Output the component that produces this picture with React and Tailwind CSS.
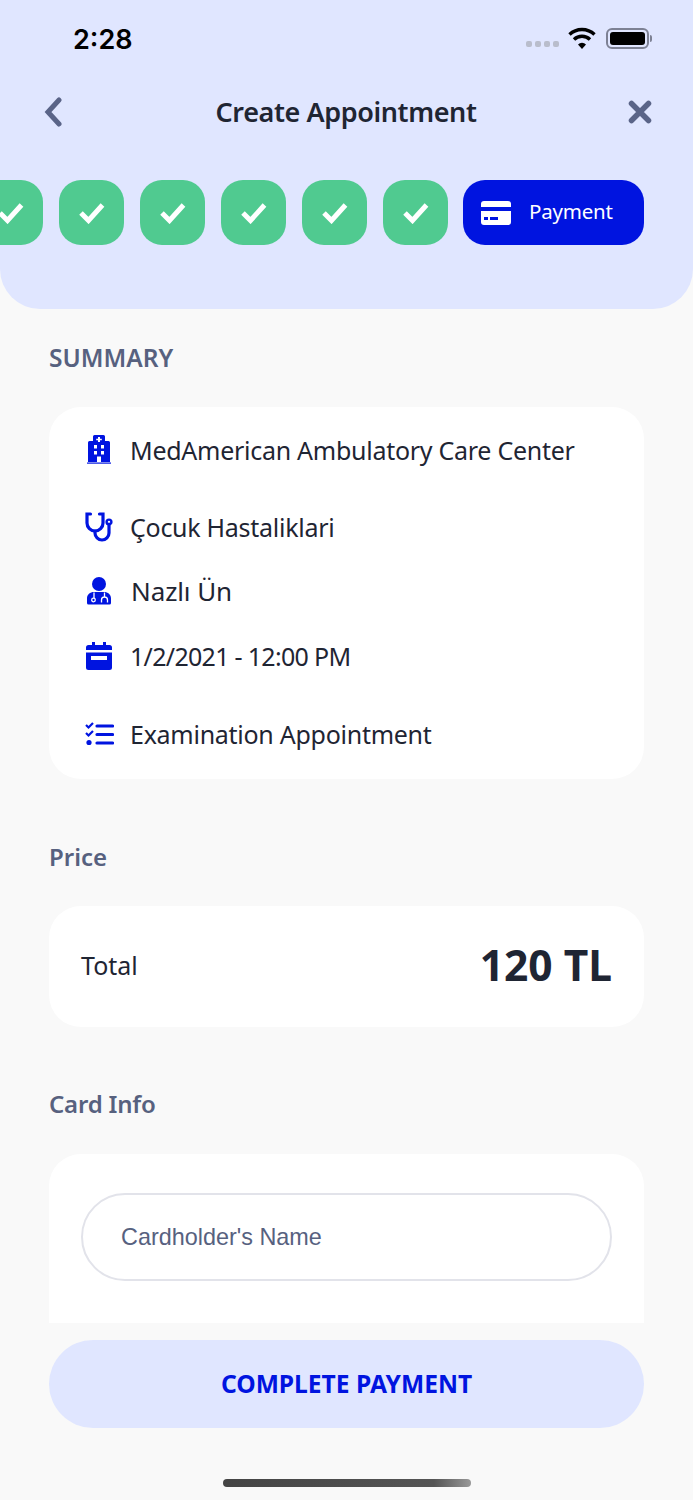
// Appointment wizard - final payment step
import React from 'react';

const CheckIcon = () => (
  <svg width="28" height="22" viewBox="0 0 28 22" fill="none">
    <path d="M3 11l7.5 7.5L24.5 3" stroke="#fff" strokeWidth="5" />
  </svg>
);

const HospitalIcon = () => (
  <svg width="26" height="30" viewBox="0 0 26 30">
    <path
      fill="#0014e0"
      fillRule="evenodd"
      d="M7 1.500A1.500 1.500 0 0 1 8.500 0h9A1.500 1.500 0 0 1 19 1.500V6h3.500A1.500 1.500 0 0 1 24 7.500V27H2V7.500A1.500 1.500 0 0 1 3.500 6H7V1.500zM12 2v1.800h-1.800v1.400H12V7h2V5.200h1.800V3.800H14V2h-2zM8 10v3.500h3V10H8zm7 0v3.500h3V10h-3zm-7 6v3.500h3V16H8zm7 0v3.500h3V16h-3zM11 21.500V27h4v-5.500h-4z"
    />
    <rect x="1" y="27.500" width="24" height="1.200" fill="#0014e0" />
  </svg>
);

const StethoscopeIcon = () => (
  <svg width="30" height="30" viewBox="0 0 30 30" fill="none" stroke="#0014e0" strokeWidth="3.200" strokeLinecap="round">
    <path d="M6.500 2H3v9a8 8 0 0 0 16 0V2h-3.500" />
    <path d="M11 19v2a7 7 0 0 0 14 0v-9" />
    <circle cx="25" cy="10" r="2.400" strokeWidth="2.400" />
  </svg>
);

const DoctorIcon = () => (
  <svg width="26" height="28" viewBox="0 0 26 28">
    <circle cx="13" cy="7" r="7" fill="#0014e0" />
    <path d="M1 21.500C1 17.500 4 15 8 15h10c4 0 7 2.500 7 6.500V26a1.500 1.500 0 0 1-1.500 1.500h-21A1.500 1.500 0 0 1 1 26z" fill="#0014e0" />
    <circle cx="7.500" cy="23" r="1.800" fill="none" stroke="#fff" strokeWidth="1.300" />
    <path d="M15.500 25.500V23a3 3 0 0 1 6 0v2.500M8 15.500v5.500M18.500 15.500V20" fill="none" stroke="#fff" strokeWidth="1.300" />
  </svg>
);

const CalendarIcon = () => (
  <svg width="26" height="28" viewBox="0 0 26 28">
    <path
      fill="#0014e0"
      fillRule="evenodd"
      d="M6 0h3v3h8V0h3v3h3.500A2.500 2.500 0 0 1 26 5.500V8H0V5.500A2.500 2.500 0 0 1 2.500 3H6V0zM0 10.500h26V25.500A2.500 2.500 0 0 1 23.500 28h-21A2.500 2.500 0 0 1 0 25.500V10.500zM5 14v4h16v-4H5z"
    />
  </svg>
);

const ChecklistIcon = () => (
  <svg width="29" height="24" viewBox="0 0 29 24" fill="none" stroke="#0014e0">
    <path d="M1 3l2.500 2.500L8 1M1 11l2.500 2.500L8 9" strokeWidth="2.200" />
    <circle cx="4" cy="20.500" r="2.600" fill="#0014e0" stroke="none" />
    <path d="M12 4h15.500M12 12.500h15.500M12 21h15.500" strokeWidth="3.200" strokeLinecap="round" />
  </svg>
);

const CardIcon = () => (
  <svg width="30" height="24" viewBox="0 0 30 24">
    <path d="M0 6V3a3 3 0 0 1 3-3h24a3 3 0 0 1 3 3v3z" fill="#fff" />
    <path
      fill="#fff"
      fillRule="evenodd"
      d="M0 10h30v11a3 3 0 0 1-3 3H3a3 3 0 0 1-3-3zM3 16v3h4v-3zM9 16v3h8v-3z"
    />
  </svg>
);

const StatusIcons = () => (
  <div className="flex items-center">
    <div className="flex gap-[3px] mt-3 mr-[9px]">
      {[0, 1, 2, 3].map((i) => (
        <span key={i} className="w-[6px] h-[6px] rounded-[2px] bg-[#b9bdcc]" />
      ))}
    </div>
    <svg width="28" height="22" viewBox="0 0 28 22" fill="none" stroke="#000" strokeWidth="3.400">
      <path d="M1.500 7.500a18 18 0 0 1 25 0" />
      <path d="M6 12.500a11.500 11.500 0 0 1 16 0" />
      <path d="M14 22l-4-4.500a5.500 5.500 0 0 1 8 0z" fill="#000" stroke="none" />
    </svg>
    <div className="flex items-center ml-[10px]">
      <div className="w-[43px] h-[21px] rounded-[6px] border-2 border-[#7d8194] p-[2px]">
        <div className="w-full h-full rounded-[3px] bg-black" />
      </div>
      <div className="w-[2px] h-[7px] ml-px rounded-r-sm bg-[#7d8194]" />
    </div>
  </div>
);

const summaryRows = [
  { icon: <HospitalIcon />, text: 'MedAmerican Ambulatory Care Center', rowClass: '', textClass: 'text-[25px] tracking-[-0.27px]' },
  { icon: <StethoscopeIcon />, text: 'Çocuk Hastaliklari', rowClass: 'mt-[37px]', textClass: 'text-[25px] tracking-[-0.27px]' },
  { icon: <DoctorIcon />, text: 'Nazlı Ün', rowClass: 'mt-[24px]', textClass: 'text-[26px] tracking-[-0.1px] ml-px' },
  { icon: <CalendarIcon />, text: '1/2/2021 - 12:00 PM', rowClass: 'mt-[25px]', textClass: 'text-[25px] tracking-[-0.7px]' },
  { icon: <ChecklistIcon />, text: 'Examination Appointment', rowClass: 'mt-[38px]', textClass: 'text-[25px] tracking-[-0.27px]' },
];

const App = () => {
  return (
    <div
      className="w-[693px] h-[1500px] overflow-hidden flex flex-col bg-[#f9f9f9] text-[#1f2533]"
      style={{ fontFamily: '"Noto Sans", sans-serif' }}
    >
      {/* Header */}
      <header className="h-[309px] shrink-0 bg-[#e0e6ff] rounded-b-[40px] overflow-hidden">
        <div className="h-[76px] pl-[73px] pr-[41px] flex items-center justify-between">
          <span className="text-[27px] leading-none font-semibold text-black font-['Inter'] mt-[3px]">2:28</span>
          <StatusIcons />
        </div>

        <div className="h-[72px] pl-[42px] pr-[41px] flex items-center justify-between">
          <svg width="22" height="30" viewBox="0 0 22 30" fill="none">
            <path d="M17 3L6 15l11 12" stroke="#5a6488" strokeWidth="5" strokeLinecap="round" />
          </svg>
          <h1 className="text-[27px] tracking-[-0.4px] font-semibold leading-none -mt-[2px]">Create Appointment</h1>
          <svg width="24" height="24" viewBox="0 0 24 24" fill="none">
            <path d="M3.500 3.500l17 17M20.500 3.500l-17 17" stroke="#5a6488" strokeWidth="5.500" strokeLinecap="round" />
          </svg>
        </div>

        {/* Wizard steps */}
        <div className="mt-[32px] ml-[-22px] flex gap-[16px]">
          {[0, 1, 2, 3, 4, 5].map((i) => (
            <div key={i} className="w-[65px] h-[65px] shrink-0 rounded-[22px] bg-[#50ca90] flex items-center justify-center">
              <CheckIcon />
            </div>
          ))}
          <div className="w-[181px] h-[65px] -ml-px shrink-0 rounded-[22px] bg-[#0014e0] flex items-center pl-[18px] gap-[18px] text-white">
            <CardIcon />
            <span className="text-[20.500px] tracking-[-0.2px] -mt-[2px]">Payment</span>
          </div>
        </div>
      </header>

      {/* Scrolling content, cut off above the pay button */}
      <main className="h-[1014px] shrink-0 px-[49px] overflow-hidden">
        <h2 className="mt-[29px] h-[40px] leading-[40px] text-[24.500px] font-semibold text-[#57617f]">SUMMARY</h2>

        <section className="mt-[29px] h-[372px] rounded-[32px] bg-white pt-[23px] pl-[35px]">
          {summaryRows.map((row) => (
            <div key={row.text} className={`h-[40px] flex items-center gap-[16px] ${row.rowClass}`}>
              <div className="w-[30px] shrink-0 flex justify-center">{row.icon}</div>
              <span className={`leading-[40px] ${row.textClass}`}>{row.text}</span>
            </div>
          ))}
        </section>

        <h2 className="mt-[58px] h-[40px] leading-[40px] text-[24px] font-semibold text-[#57617f]">Price</h2>

        <section className="mt-[29px] h-[121px] rounded-[32px] bg-white px-[32px] flex items-center justify-between">
          <span className="text-[25px] -mt-[2px]">Total</span>
          <span className="text-[42.500px] font-bold -mt-[3px]">120 TL</span>
        </section>

        <h2 className="mt-[57px] h-[40px] leading-[40px] text-[24px] tracking-[-0.2px] font-semibold text-[#57617f]">Card Info</h2>

        <section className="mt-[30px] h-[260px] rounded-[32px] bg-white px-[32px] pt-[39px]">
          <input
            readOnly
            placeholder="Cardholder's Name"
            className="w-full h-[88px] rounded-full border-2 border-[#e2e3ea] px-[38px] text-[23.400px] font-['Liberation_Sans'] placeholder:text-[#57617f] outline-none"
          />
        </section>
      </main>

      {/* Footer */}
      <div className="px-[49px] pt-[17px]">
        <button className="w-full h-[88px] rounded-full bg-[#e0e6ff] text-[24.600px] font-bold text-[#0014e0]">
          COMPLETE PAYMENT
        </button>
      </div>
      <div className="mt-[51px] mx-auto w-[248px] h-[8px] rounded-full bg-gradient-to-r from-[#444] via-[#555] via-85% to-[#999]" />
    </div>
  );
};

export default App;
